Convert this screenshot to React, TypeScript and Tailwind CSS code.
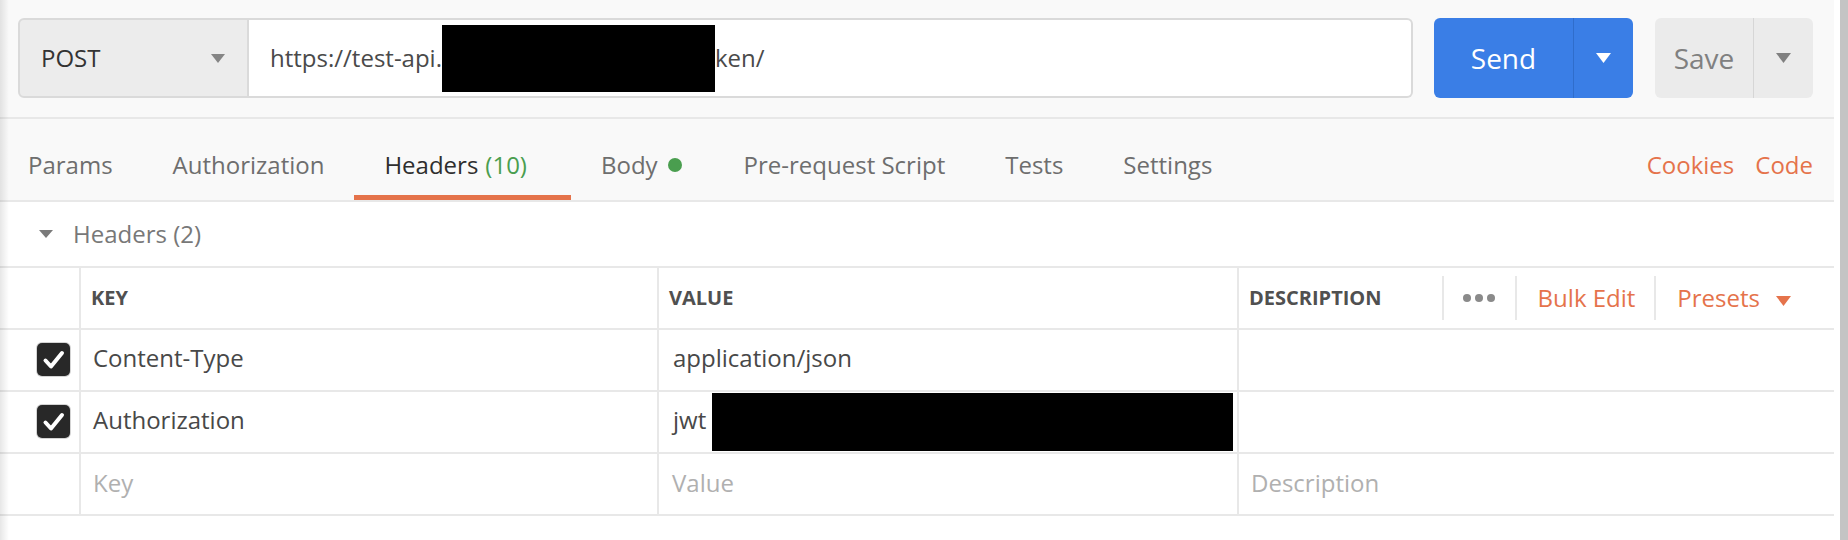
import React from 'react';

type Tab = {
  label: string;
  count?: string;
  dot?: boolean;
  active?: boolean;
};

const tabs: Tab[] = [
  { label: 'Params' },
  { label: 'Authorization' },
  { label: 'Headers', count: '(10)', active: true },
  { label: 'Body', dot: true },
  { label: 'Pre-request Script' },
  { label: 'Tests' },
  { label: 'Settings' },
];

type HeaderRow = {
  key: string;
  value: string;
  redacted?: boolean;
};

const rows: HeaderRow[] = [
  { key: 'Content-Type', value: 'application/json' },
  { key: 'Authorization', value: 'jwt', redacted: true },
];

// small solid "down" triangle used by every dropdown
const Caret: React.FC<{ w?: number; h?: number; className?: string }> = ({ w = 14, h = 8, className }) => (
  <svg width={w} height={h} viewBox={`0 0 ${w} ${h}`} className={className}>
    <polygon points={`0,0 ${w},0 ${w / 2},${h}`} fill="currentColor" />
  </svg>
);

const CheckBox = () => (
  <div className="flex h-[33px] w-[33px] items-center justify-center rounded-[5px] bg-[#282828] shadow-[0_0_0_1px_#d4d4d4]">
    <svg width="33" height="33" viewBox="0 0 33 33">
      <path d="M8.5 17.5 L14 23.5 L25 10" fill="none" stroke="white" strokeWidth="4" strokeLinecap="round" strokeLinejoin="round" />
    </svg>
  </div>
);

const Sep = () => <div className="h-[44px] w-[2px] bg-[#e8e8e8]" />;

export default function App() {
  return (
    <div className="relative flex h-[540px] w-full overflow-hidden bg-white font-['Open_Sans',sans-serif] text-[24px]">
      <div className="flex min-w-0 flex-1 flex-col">
        {/* request url bar */}
        <div className="flex h-[119px] shrink-0 items-start border-b-2 border-[#e8e8e8] bg-[#f9f9f9] pl-[18px] pt-[18px]">
          <div className="flex h-[80px] w-[231px] items-center justify-between rounded-l-[6px] border-2 border-[#dadada] bg-[#ececec] pl-[21px] pr-[22px] text-[#333]">
            <span>POST</span>
            <Caret w={14} h={9} className="text-[#858585]" />
          </div>
          <div className="flex h-[80px] w-[1164px] items-center rounded-r-[6px] border-2 border-l-0 border-[#dadada] bg-white pl-[21px] text-[#4a4a4a]">
            <span>https://test-api.</span>
            <div className="h-[67px] w-[273px] bg-black" />
            <span>ken/</span>
          </div>
          <div className="ml-[21px] flex h-[80px] w-[199px] overflow-hidden rounded-[6px] bg-[#3a7ee6] text-white">
            <div className="flex w-[139px] items-center justify-center text-[28px]">Send</div>
            <div className="flex flex-1 items-center justify-center border-l border-[#2f6dcc]">
              <Caret w={15} h={10} />
            </div>
          </div>
          <div className="ml-[22px] flex h-[80px] w-[158px] overflow-hidden rounded-[6px] bg-[#ebebeb] text-[#808080]">
            <div className="flex w-[98px] items-center justify-center text-[28px]">Save</div>
            <div className="flex flex-1 items-center justify-center border-l border-[#d6d6d6]">
              <Caret w={15} h={10} />
            </div>
          </div>
        </div>

        {/* tabs */}
        <div className="flex h-[83px] shrink-0 border-b-2 border-[#e8e8e8] bg-[#f9f9f9]">
          {tabs.map((t, i) => (
            <div
              key={t.label}
              className={`flex h-full items-center border-b-[5px] pt-[16px] ${i === 0 ? 'pl-[28px] pr-[30px]' : t.dot ? 'pl-[30px] pr-[32px]' : 'px-[30px]'} ${
                t.active ? 'border-[#e5734b] pr-[44px] text-[#2e2e2e]' : 'border-transparent text-[#6e6e6e]'
              }`}
            >
              <span>{t.label}</span>
              {t.count && <span className="ml-[7px] text-[#4a9e4f]">{t.count}</span>}
              {t.dot && <span className="ml-[10px] h-[14px] w-[14px] rounded-full bg-[#4a9e4f]" />}
            </div>
          ))}
          <div className="ml-auto flex items-center gap-[21px] pb-[5px] pr-[21px] pt-[16px] text-[#e5734b]">
            <span>Cookies</span>
            <span>Code</span>
          </div>
        </div>

        {/* headers section title */}
        <div className="flex h-[64px] shrink-0 items-center pl-[39px] text-[#787878]">
          <Caret w={14} h={8} className="text-[#7a7a7a]" />
          <span className="ml-[20px]">Headers (2)</span>
        </div>

        {/* headers table */}
        <div className="border-t-2 border-[#e8e8e8]">
          <div className="flex h-[62px] border-b-2 border-[#e8e8e8] text-[20px] font-bold text-[#505050]">
            <div className="w-[79px]" />
            <div className="flex w-[578px] items-center border-l-2 border-[#e8e8e8] pl-[10px]">KEY</div>
            <div className="flex w-[580px] items-center border-l-2 border-[#e8e8e8] pl-[10px]">VALUE</div>
            <div className="flex flex-1 items-center border-l-2 border-[#e8e8e8] pl-[10px]">
              <span>DESCRIPTION</span>
              <div className="ml-auto flex items-center pr-[43px] text-[24px] font-normal">
                <Sep />
                <div className="flex items-center gap-[4px] pl-[19px] pr-[20px]">
                  <span className="h-[8px] w-[8px] rounded-full bg-[#8a8a8a]" />
                  <span className="h-[8px] w-[8px] rounded-full bg-[#8a8a8a]" />
                  <span className="h-[8px] w-[8px] rounded-full bg-[#8a8a8a]" />
                </div>
                <Sep />
                <span className="pl-[21px] pr-[19px] text-[#e5734b]">Bulk Edit</span>
                <Sep />
                <span className="pl-[21px] text-[#e5734b]">Presets</span>
                <Caret w={15} h={10} className="ml-[16px] mt-[6px] text-[#e5734b]" />
              </div>
            </div>
          </div>

          {rows.map((r) => (
            <div key={r.key} className="flex h-[62px] border-b-2 border-[#e8e8e8] text-[#484848]">
              <div className="flex w-[79px] items-center pb-[1px] pl-[37px]">
                <CheckBox />
              </div>
              <div className="flex w-[578px] items-center border-l-2 border-[#e8e8e8] pb-[4px] pl-[12px]">{r.key}</div>
              <div className="flex w-[580px] items-center border-l-2 border-[#e8e8e8] pl-[14px]">
                <span className="pb-[4px]">{r.value}</span>
                {r.redacted && <div className="ml-[6px] h-[58px] w-[521px] bg-black" />}
              </div>
              <div className="flex-1 border-l-2 border-[#e8e8e8]" />
            </div>
          ))}

          <div className="flex h-[62px] border-b-2 border-[#e8e8e8] text-[#b0b0b0]">
            <div className="w-[79px]" />
            <div className="flex w-[578px] items-center border-l-2 border-[#e8e8e8] pb-[3px] pl-[12px]">Key</div>
            <div className="flex w-[580px] items-center border-l-2 border-[#e8e8e8] pb-[3px] pl-[13px]">Value</div>
            <div className="flex flex-1 items-center border-l-2 border-[#e8e8e8] pb-[3px] pl-[12px]">Description</div>
          </div>
        </div>
      </div>

      {/* gutter and scrollbar on the right */}
      <div className="w-[6px] shrink-0 bg-white" />
      <div className="w-[8px] shrink-0 bg-[#c4c4c4]" />

      {/* shadow cast by the sidebar on the left edge */}
      <div className="pointer-events-none absolute left-0 top-0 h-full w-[9px] bg-linear-to-r from-[#00000018] to-transparent" />
    </div>
  );
}
